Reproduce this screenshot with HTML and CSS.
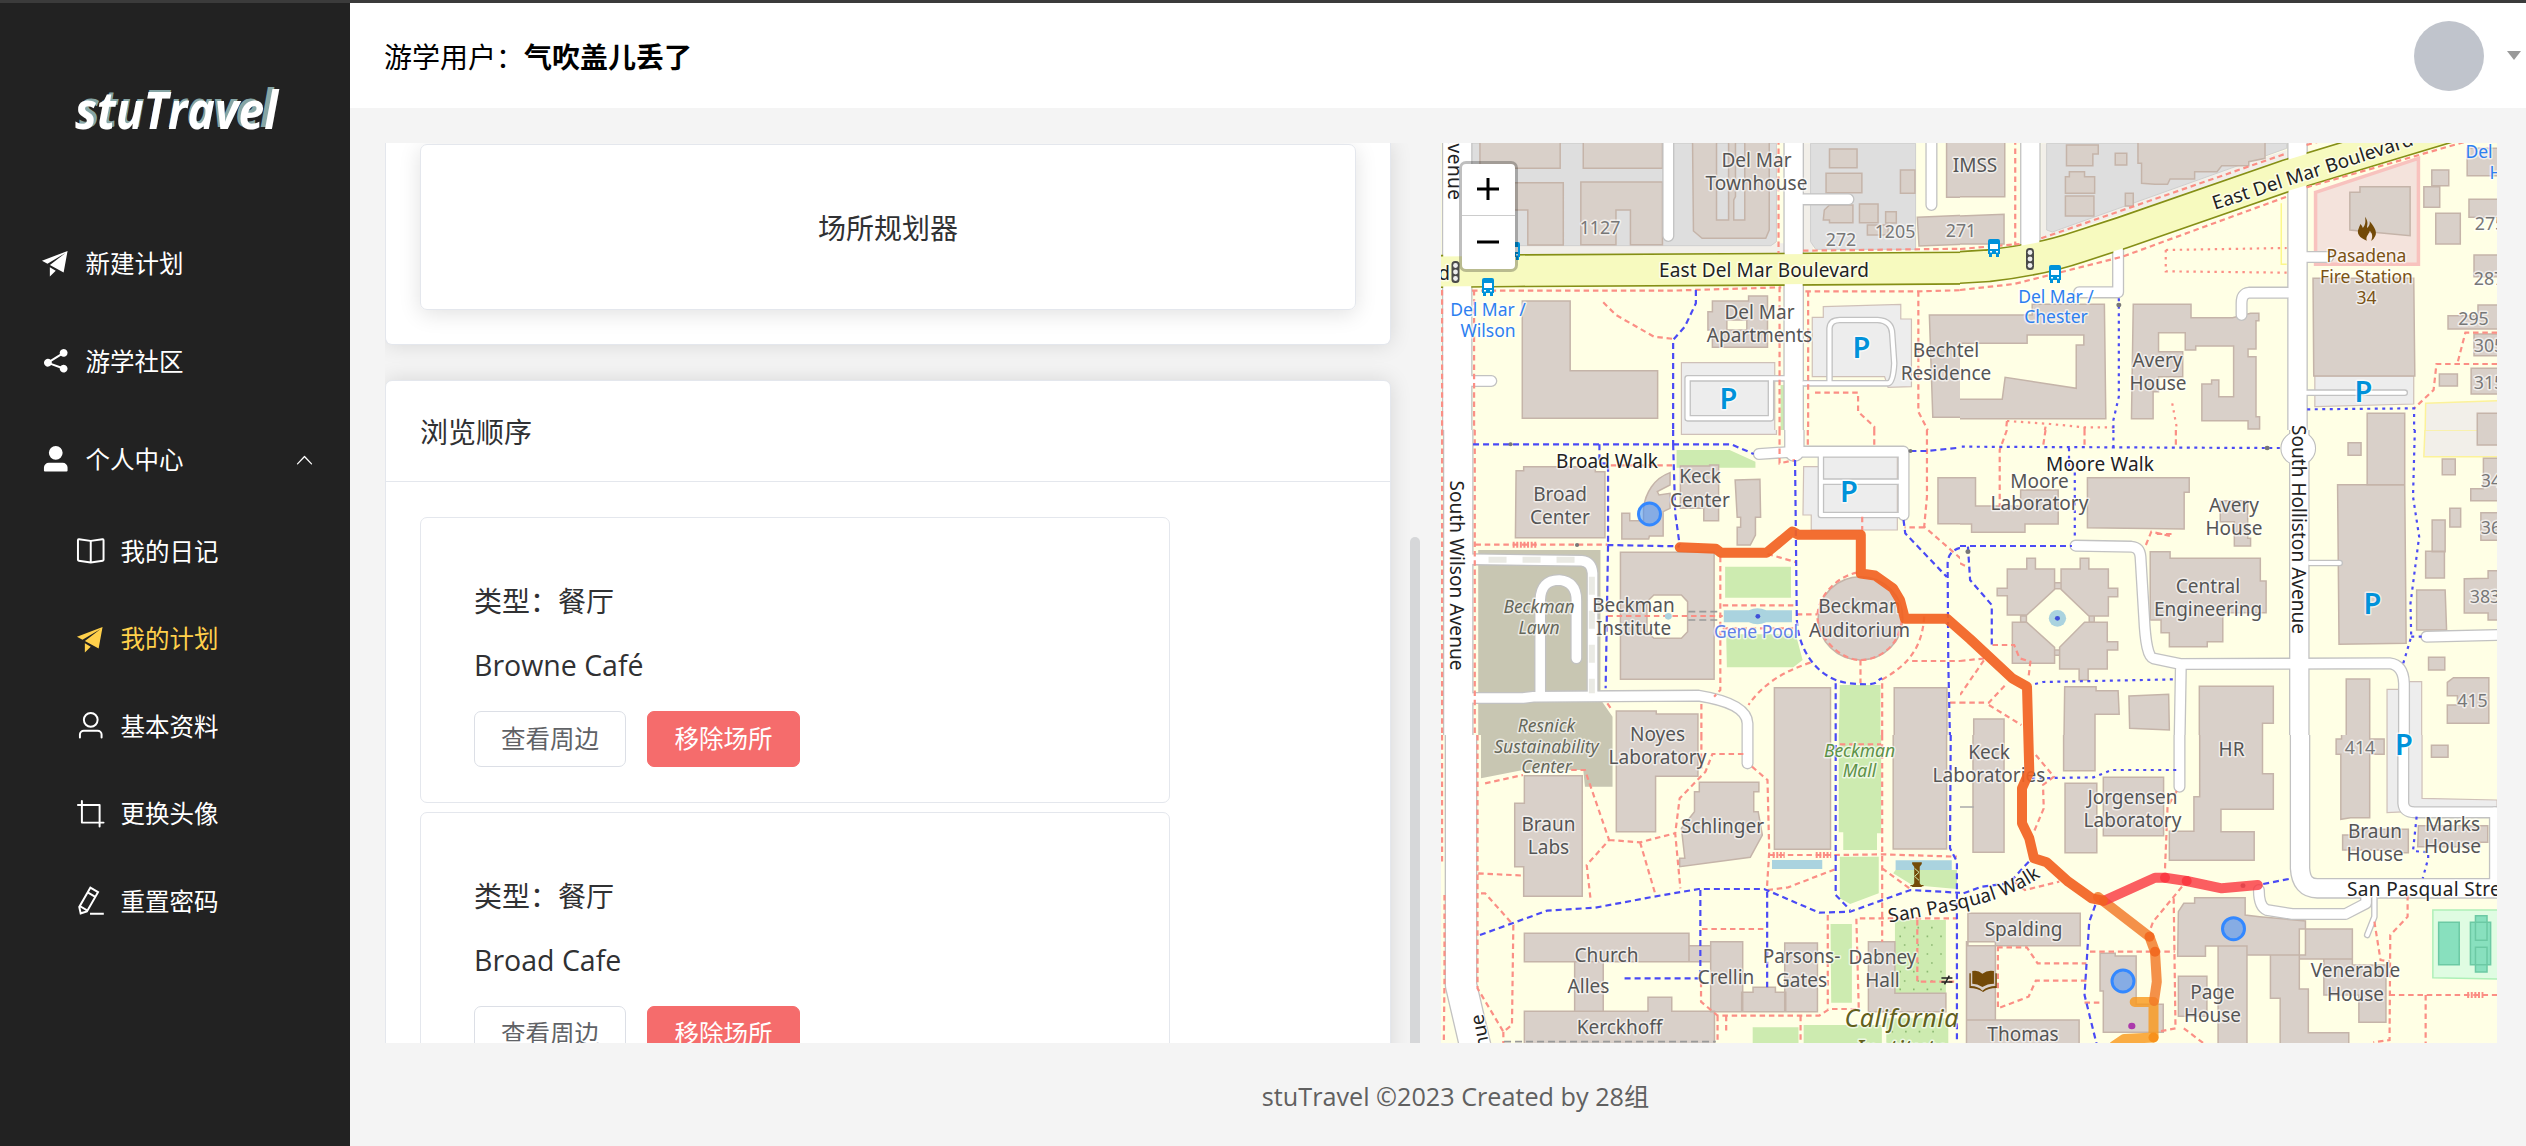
FILE: index.html
```html
<!DOCTYPE html>
<html lang="zh-CN">
<head>
<meta charset="utf-8">
<title>stuTravel</title>
<link rel="stylesheet" href="styles.css">
</head>
<body>
<div class="app">
  <aside class="sidebar">
    <svg class="logo" width="350" height="120" viewBox="0 0 350 120">
      <text class="logo-shadow" x="79" y="83" textLength="194" lengthAdjust="spacingAndGlyphs">stuTravel</text>
      <text class="logo-text" x="75" y="85" textLength="203" lengthAdjust="spacingAndGlyphs">stuTravel</text>
    </svg>
    <nav class="menu">
      <a class="item"><svg class="icon" viewBox="0 0 1024 1024"><path d="m64 448 832-320-128 704-446.08-243.328L832 192 242.816 545.472 64 448zm256 512V657.024L512 768 320 960z"/></svg>新建计划</a>
      <a class="item"><svg class="icon" viewBox="0 0 1024 1024"><path d="m679.872 348.8-301.76 188.608a127.808 127.808 0 0 1 5.12 52.16l279.936 104.96a128 128 0 1 1-22.464 59.904l-279.872-104.96a128 128 0 1 1-16.64-166.272l301.696-188.608a128 128 0 1 1 33.92 54.272z"/></svg>游学社区</a>
      <a class="item"><svg class="icon" viewBox="0 0 1024 1024"><path d="M288 320a224 224 0 1 0 448 0 224 224 0 1 0-448 0zm544 608H160a32 32 0 0 1-32-32v-96a160 160 0 0 1 160-160h448a160 160 0 0 1 160 160v96a32 32 0 0 1-32 32z"/></svg>个人中心<svg class="arrow" viewBox="0 0 1024 1024"><path d="m488.832 344.32-339.84 356.672a32 32 0 0 0 0 44.16l.384.384a29.44 29.44 0 0 0 42.688 0l320-335.872 319.872 335.872a29.44 29.44 0 0 0 42.688 0l.384-.384a32 32 0 0 0 0-44.16L535.168 344.32a32 32 0 0 0-46.336 0z"/></svg></a>
      <a class="item sub"><svg class="icon" viewBox="0 0 1024 1024"><path d="m512 863.36 384-54.848v-638.72L525.568 222.72a96 96 0 0 1-27.136 0L128 169.792v638.72l384 54.848zM137.024 106.432l370.432 52.928a32 32 0 0 0 9.088 0l370.432-52.928A64 64 0 0 1 960 169.792v638.72a64 64 0 0 1-54.976 63.36l-388.48 55.488a32 32 0 0 1-9.088 0l-388.48-55.488A64 64 0 0 1 64 808.512v-638.72a64 64 0 0 1 73.024-63.36z"/><path d="M480 192h64v704h-64z"/></svg>我的日记</a>
      <a class="item sub active"><svg class="icon" viewBox="0 0 1024 1024"><path d="m64 448 832-320-128 704-446.08-243.328L832 192 242.816 545.472 64 448zm256 512V657.024L512 768 320 960z"/></svg>我的计划</a>
      <a class="item sub"><svg class="icon" viewBox="0 0 1024 1024"><path d="M512 512a192 192 0 1 0 0-384 192 192 0 0 0 0 384zm0 64a256 256 0 1 1 0-512 256 256 0 0 1 0 512zm320 320v-96a96 96 0 0 0-96-96H288a96 96 0 0 0-96 96v96a32 32 0 1 1-64 0v-96a160 160 0 0 1 160-160h448a160 160 0 0 1 160 160v96a32 32 0 1 1-64 0z"/></svg>基本资料</a>
      <a class="item sub"><svg class="icon" viewBox="0 0 1024 1024"><path d="M256 768h672a32 32 0 1 1 0 64H224a32 32 0 0 1-32-32V96a32 32 0 0 1 64 0v672z"/><path d="M832 224v704a32 32 0 1 1-64 0V256H96a32 32 0 0 1 0-64h704a32 32 0 0 1 32 32z"/></svg>更换头像</a>
      <a class="item sub"><svg class="icon" viewBox="0 0 1024 1024"><path d="m199.04 672.64 193.984 112 224-387.968-193.92-112-224 388.032zm-23.872 60.16 32.896 148.288 144.896-45.696L175.168 732.8zM455.04 229.248l193.92 112 56.704-98.112-193.984-112-56.64 98.112zM104.32 708.8l384-665.024 304.768 175.936L409.152 884.8h.064l-248.448 78.336L104.32 708.8zm384 254.272v-64h448v64h-448z"/></svg>重置密码</a>
    </nav>
  </aside>
  <div class="main">
    <header class="header">
      <div>游学用户：<strong>气吹盖儿丢了</strong></div>
      <div class="user"><span class="avatar"></span><span class="caret"></span></div>
    </header>
    <main class="content">
      <div class="panel">
        <section class="card card-top"><div class="planner">场所规划器</div></section>
        <section class="card">
          <h2 class="card-header">浏览顺序</h2>
          <div class="card-body">
            <article class="place">
              <p>类型：餐厅</p><p class="place-name">Browne Café</p>
              <div class="actions"><button class="btn">查看周边</button><button class="btn danger">移除场所</button></div>
            </article>
            <article class="place">
              <p>类型：餐厅</p><p class="place-name">Broad Cafe</p>
              <div class="actions"><button class="btn">查看周边</button><button class="btn danger">移除场所</button></div>
            </article>
          </div>
        </section>
        <span class="thumb"></span>
      </div>
      <div class="map">
<svg class="map-canvas" width="1056" height="900" viewBox="1441 143 1056 900">
<defs>
  <g id="bus"><path d="M-6-7q0-2 2-2h8q2 0 2 2V6h-12zM-5 5h3v4h-3zM2 5h3v4h-3z" fill="#0092da"/><path d="M-4-4h8v5h-8z" fill="#fff"/><path d="M-4 3h2v1.500h-2zM2 3h2v1.500h-2z" fill="#fff"/></g>
  <g id="signal"><rect x="-4" y="-11" width="8" height="22" rx="3.500" fill="#4a4a4a"/><circle cy="-6.500" r="2.400" fill="#eee"/><circle r="2.400" fill="#eee"/><circle cy="6.500" r="2.400" fill="#eee"/></g>
</defs>

<!-- north west -->
<svg x="1430" y="130" width="540" height="310" viewBox="0 0 1568 930" preserveAspectRatio="none">
  <defs><g id="roads-nw"><path class="w28" d="M79 -20V950"/><path class="w19" d="M1056 -20V950"/><path class="w10" d="M692 -20V318M1456 -20V225M1085 208H1215M120 753H178"/><path class="w4" d="M748 745H1030M748 745V865H990V745M1160 760V595Q1162 570 1190 570H1300Q1340 572 1342 610L1348 700Q1345 758 1330 760H1085"/></g>
  <path id="blvd-nw" class="w30" d="M-20 425L250 422L1000 418L1600 414"/></defs>
  <rect class="land" width="1568" height="930"/>
  <path class="beige" d="M120 340H1028V375H120zM1083 40h30v330h-30z"/>
  <path class="grey" d="M120 40H1006V335L990 347H120zM1105 40H1410V358H1120L1105 335z"/>
  <path class="parking" d="M730 698h271v215H730zM1142 530L1367 523V567H1398V770L1330 772L1320 740H1110V562H1142z"/>
  <path class="grass" d="M1018 765h12v165h-12z"/>
  <path class="building" d="M145 0h233v115H145zM445 0h230v115H445zM245 158h142v187H284V240H245zM438 156h237v188H582V240H540V344H438zM762 0H985V300L975 325H790L765 303zM832 0V270H867V0zM887 0V200L882 210V270H914V0zM1160 57h80v56h-80zM1150 130h104v58h-104zM1366 120h42v70h-42zM1247 222h54v56h-54zM1323 245h31v34h-31zM1145 240L1160 225H1228V278H1160V270H1142zM1270 285h60v30h-60zM1500 0h68v202h-68zM1415 262L1568 255V342L1420 348zM820 513H925V498H980V652H820V600H807V545H820zM862 570V600H920V570zM268 513H407V722H661V865H268zM1450 555H1568V862H1460z"/>
  <use href="#roads-nw" class="casing"/><use href="#blvd-nw" class="casing2"/><use href="#roads-nw" class="street"/><use href="#blvd-nw" class="street2"/>
  <path class="foot" d="M122 482H700L1020 472M128 480V930M1012 0V370M1015 470V930M1083 362L1568 356M1090 484H1418L1568 480M1098 484V930M1418 484V845L1445 900V930M503 517L540 555L650 620L710 627M1118 788H1243V845L1290 890V930M35 480V930"/>
  <path class="cycle" d="M772 480V520L740 590L706 630V930"/>
</svg>

<!-- south-west block, middle row -->
<svg x="1430" y="430" width="540" height="310" viewBox="0 0 1568 930" preserveAspectRatio="none">
  <defs><g id="roads-w"><path class="w28" d="M82 -20V950"/><path class="w19" d="M1058 -20V65"/><path class="w10" d="M955 72L1058 65H1375V255M125 388L440 392Q470 395 472 430V790M320 790V510Q322 450 375 450Q425 455 425 510V685M125 804H270L300 800L780 797Q920 820 922 880V950"/><path class="w4" d="M1135 70V255H1370M1135 155H1360"/></g></defs>
  <rect class="land" width="1568" height="930"/>
  <path class="olive" d="M140 360H495V790H140zM140 815H500L530 860V930H140z"/>
  <path class="grass" d="M716 60H870L945 95V113H716zM857 410H1048V503H857zM860 613H1062L1082 690L1055 712H862zM1190 765H1308V930H1187z"/>
  <path class="water" d="M853 541h73q25-12 50 0h75v36h-75q-25 12-50 0h-73z"/>
  <path class="parking" d="M730 -5h276v18H730zM1085 110H1135V80H1357V300H1107V255H1083z"/>
  <path class="building" d="M250 122H272V110H480V125H508V323H248zM727 108H812V105H838V272H795V235H727zM886 150L958 148L960 262H945V315L930 345H892V292H902V262H892zM620 235C625 190 650 145 697 128V165L660 185L665 195L697 190V235L677 245V318H637L635 327H557V250H580V272H620zM553 367H825V748H553zM650 495L630 515V605L650 625H730L748 605V515L730 495zM1127 565a123 125 0 1 0 246 0a123 125 0 1 0 -246 0zM1475 143h93v138h-93zM1000 773h163v160h-163zM1348 773h153v160h-153zM541 843H657V852H778V935H541z"/>
  <use href="#roads-w" class="casing"/><use href="#roads-w" class="street"/>
  <path d="M170 389H430M470 440V790" fill="none" stroke="#eaeae4" stroke-width="6" stroke-dasharray="18 16"/>
  <path class="foot" d="M35 0V930M130 0V930M132 344H515M515 558H850M843 380V780L825 800M850 526H1065M850 595H1065M980 372L1065 397M1065 553H1125M1240 428C1180 440 1125 500 1125 560S1190 690 1250 690S1370 640 1370 560M1435 560C1430 640 1400 700 1310 750M1250 690V760M1400 693H1568M1105 698C1020 725 960 770 925 825M1313 760V930M1290 0V45M1443 0V200L1435 290L1568 410M1435 292H1378M1255 260V300M1015 0V100L1060 90M1097 0V45M525 106H710M515 820L525 835M788 822V930M1510 818H1568"/>
  <path class="steps" d="M240 344H312"/>
  <path class="cycle" d="M125 43H875L940 72M706 0V45M492 43V100H517V345L510 775M706 43L712 250L725 345M515 345L725 349M1060 90L1065 560C1065 650 1120 750 1220 760S1290 750 1313 745M1178 760V930M1375 270L1380 310L1500 440M1568 350Q1505 350 1503 400L1505 700L1510 930M1395 63H1440L1568 50"/>
  <path class="tunnel" d="M750 545H840M750 570H840"/>
  <circle cx="234" cy="43" r="6" fill="#777"/><circle cx="427" cy="345" r="6" fill="#777"/><circle cx="1395" cy="63" r="6" fill="#777"/>
  <circle cx="692" cy="559" r="10" fill="#aad3df"/><circle cx="952" cy="559" r="7" fill="#4050d8"/>
</svg>

<!-- south west -->
<svg x="1430" y="735" width="540" height="320" viewBox="0 0 1568 960" preserveAspectRatio="none">
  <defs><g id="roads-sw"><path class="w30" d="M90 -20V750L142 980"/><path class="w10" d="M922 -20V85"/></g></defs>
  <rect class="land" width="1568" height="960"/>
  <path class="olive" d="M148 0H530V155H450L445 105H270L148 130z"/>
  <path class="grass" d="M1187 0H1310V295H1298V345H1200V292H1187zM1190 365H1303V475L1220 507L1190 490zM1352 405H1530V462L1400 450L1345 415zM1163 567H1225V803H1165zM1350 555H1498V775H1350zM937 877H1070V930H937zM1085 870H1312V930H1085zM1325 850h180v80h-180z"/>
  <path class="orchard" d="M1376 578H1490M1363 604H1490M1376 630H1490M1363 657H1490M1376 684H1490M1363 710H1490M1376 738H1490M1363 763H1490M1340 890H1490"/>
  <path class="water" d="M993 375h146v27H993zM1352 376h163v29h-163z"/>
  <path class="building" d="M274 122H442V484H272V395H246V205H274zM541 -5H778V124H655V290H541zM782 142H955V170H940V230H953L965 300L930 367L725 395V370H740L730 280L768 230V170H782zM1000 -5h163v348h-163zM1345 -5h155v347h-155zM274 595H752V680H274zM752 632H815V680H752zM815 620H908V830H815zM905 772H938V757H1003V772H1033V830H905zM1030 624H1125V830H1030zM420 680H503V829H420zM274 829H633V787H702V829H826V965H274zM1273 620H1350V775H1498V830H1273zM1558 600H1600V715H1558zM1558 760H1600V960H1558z"/>
  <use href="#roads-sw" class="casing"/><use href="#roads-sw" class="street"/>
  <path class="foot" d="M138 0V760L213 890L238 870L242 570L160 475H138M213 890V930M140 415L275 422M160 145L270 120M410 105H450L520 315L455 390L467 500M520 315L610 322L710 295M610 322L655 480M788 0V110M910 57H820L800 110L725 190L712 295L727 460M935 95L980 135L985 350L978 465M985 360H1178L1315 358L1530 365M980 465L1040 457L1178 402M1313 0V620M1313 400L1395 462M790 582H978M787 740V800L835 842H1130L1160 822H1245L1238 550H1530M1155 540V820M860 842V890M1076 842V930M835 842V930M1415 555V740H1525M35 0V390M42 480V735L40 930M1190 28H1310"/>
  <path class="steps" d="M995 360H1030M1120 360H1165"/>
  <path class="cycle" d="M145 600L340 527L480 518L650 485L780 462H970L1130 533L1220 530L1395 465L1568 475M1178 0V480L1220 525M785 465V740M565 730H785M979 470V757M1512 0L1510 340L1530 380V930"/>
  <path class="tunnel" d="M215 920H830"/>
  <path d="M1400 382h28v5l-6 8v50l6 8v3h-28v-3l6-8v-50l-6-8zM1395 450h38v4h-38z" fill="#734a08"/><path d="M1407 400l13 12-13 12 13 12" fill="none" stroke="#cdebb0" stroke-width="1"/>
  <path d="M1485 729H1517M1485 741H1517M1508 722L1494 748" stroke="#222" stroke-width="1.500"/>
</svg>

<!-- north east -->
<svg x="1960" y="130" width="566" height="310" viewBox="0 0 1568 930" preserveAspectRatio="none">
  <defs><g id="roads-ne"><path class="w19" d="M195 -20V360M935 -20V950"/><path class="w10" d="M438 350V487H330M960 381H1020M908 488H800Q780 490 780 520V555"/><path class="w4" d="M960 788H1232"/></g>
  <path id="blvd-ne" class="w30" d="M-40 415L80 407Q220 390 330 350L450 308L905 137L1200 40L1400 -25"/></defs>
  <rect class="land" width="1568" height="930"/>
  <path class="beige" d="M225 40H250V320L225 330zM240 300L905 60V95L240 325z"/>
  <path class="grey" d="M240 40H905V55L256 306L240 300z"/>
  <path class="beige" d="M1290 820L1500 812V940H1288z" stroke="#fcf29a" stroke-width="1.500"/>
  <path d="M890 220V403H905" fill="none" stroke="#fcf88a" stroke-width="1.500"/>
  <path d="M985 187L1270 85V403H985z" fill="#f4e3dc" stroke="#f8c2be" stroke-width="3.500"/>
  <path class="parking" d="M983 738H1257V822L983 830z"/>
  <path class="building" d="M-5 0H124V200H-5zM-5 258L122 253V342H-5zM295 45H383V72H368V107H295zM430 70h32v35h-32zM292 140H303V125H345V140H373V190H292zM292 198h79v60h-79zM458 190h22v38h-22zM493 0H845V85L800 95V107H725L712 125H650V147H582L575 163H540L503 160V100H493zM1080 187H1108V170H1247V317L1080 300zM1405 55h90v82h-90zM1307 120h47v47h-47zM1285 170h44v62h-44zM1318 250h68v92h-68zM1410 208h90v54h-90zM1424 375h70v65h-70zM1352 557H1435V525H1500V597H1352zM1424 612h70v65h-70zM1416 715h80v77h-80zM1328 732h50v36h-50zM978 445H1257L1260 738H980zM1128 850h104v90h-104zM1433 850h70v90h-70zM-5 555H200V523H400L404 866H-5V808H117L125 742L322 775V645H343V615H186V640H-5zM480 523H640V563H755L805 550H828V572H820V657H798V680H820V860H830V897H798V872H670V762H697V750H717V800H758V648H653V660H624V608H550V665H617V740H550V785H535V866H475z"/>
  <use href="#roads-ne" class="casing"/><use href="#blvd-ne" class="casing2"/><use href="#roads-ne" class="street"/><use href="#blvd-ne" class="street2"/>
  <path class="foot" d="M153 0V345M0 357L165 342M225 325L905 70M960 45L1010 30M0 480L150 462L450 380L905 200M960 172L1400 35M130 873L130 875M130 873L125 930M237 890L230 930M345 892V930M1488 608H1400L1378 700M1488 702H1320L1312 780L1258 835"/>
  <path class="foot dotted" d="M570 360L905 354M570 360V424L905 428M130 873L250 882L345 892H425M588 820L600 890V930"/>
  <path class="cycle dotted" d="M440 505V800L425 870V930M962 838L1258 835V930"/>
  <circle cx="440" cy="525" r="7" fill="#777"/>
  <path d="M1122 260c12 18 4 26 6 34c6-5 8-12 7-20c14 18 24 36 12 50c-2 4-4 6-8 8c6-14 2-24-4-30c-2 12-12 16-8 30c-20-8-30-22-22-38c2-6 4-10 4-12c4 4 6 8 7 12c8-10 8-22 6-34z" fill="#734a08"/>
</svg>

<!-- middle east -->
<svg x="1960" y="430" width="566" height="310" viewBox="0 0 1568 930" preserveAspectRatio="none">
  <defs><g id="roads-e"><path class="w19" d="M940 -20V950"/><path class="w10" d="M320 347L475 350Q498 352 500 380L510 560Q515 680 535 685L610 702L1190 700Q1228 705 1230 760V950M612 702L608 950M1292 620L1520 614"/><path class="w4" d="M968 399H1052"/></g></defs>
  <rect class="land" width="1568" height="930"/>
  <path class="beige" d="M1288 0H1500V80H1285z" stroke="#fcf29a" stroke-width="1.500"/>
  <path class="parking" d="M1183 778h34v160h-34zM1245 755h34v185h-34z"/>
  <path class="building" d="M-5 143H43V228H168V180H272V282H180V307H32V282H-5zM353 143H635V187H621V297L353 293zM527 365H582V385H832V453H848V548H728V635H685V650H580V608H557V570H527zM721 212H797V325H805V348H760V275H721zM1128 -5H1232V165H1128zM1046 164H1232L1236 640L1050 643zM1075 38h36v38h-36zM1433 -5h60v50h-60zM1336 87h36v47h-36zM1450 85H1500V212H1415V176H1450zM1357 235h30v56h-30zM1308 270h36v95h-36zM1443 248h60v83h-60zM1290 364h52v80h-52zM1397 446L1463 445V422H1500V570H1463V549H1397zM1265 480h79l4 120h-83zM1298 682h45v38h-45zM1350 757L1367 743H1465V880H1350V825H1378V797H1350zM1070 747h65v190h-65zM663 769H868V880H838V935H663zM468 798L578 793L580 900L470 895zM290 770H377V782H438L441 853H374V935H288zM38 867h84v70h-84zM131 417H185V385H209V417H262V478L185 555H131V497H103V475H131zM280 417H333V385H357V417H411V475H437V500H411V558H357L280 478zM145 577H185L262 652V700H145zM276 652L345 577H408V635H437V660H408V717H355V750H330V717H276zM262 458h18v18h-18zM168 558h16v18h-16zM358 558h14v18h-14zM262 660h14v16h-14z"/>
  <ellipse cx="270" cy="565" rx="24" ry="25" fill="#aad3df"/><circle cx="270" cy="565" r="7" fill="#4050d8"/>
  <use href="#roads-e" class="casing"/><ellipse cx="937" cy="55" rx="48" ry="51" fill="#fff" stroke="#bdbdbd" stroke-width="3"/><use href="#roads-e" class="street"/>
  <path class="foot" d="M130 0L110 60V230M237 0L230 50M345 0V50M598 0V55M515 345L530 305L590 320M545 312H590M90 645H150L165 685L195 695L190 740M0 693L70 685L0 795M0 818H80L130 760M80 825L170 885M0 400L20 410"/>
  <path class="cycle dotted" d="M5 50L850 54L890 54M425 0V50M302 55V120H318V330M1260 0L1255 200L1272 320L1248 520L1250 620L1228 700M208 762L230 756L600 748M1250 620H1285"/>
  <path class="cycle" d="M0 348H310M22 350L28 450L88 525V655"/>
  <circle cx="851" cy="54" r="7" fill="#777"/><circle cx="22" cy="365" r="7" fill="#777"/>
</svg>

<!-- south east -->
<svg x="1960" y="735" width="566" height="320" viewBox="0 0 1568 960" preserveAspectRatio="none">
  <defs><g id="roads-se"><path class="w19" d="M942 -20V400Q945 460 990 460H1520"/><path class="w10" d="M608 -20V155M828 465Q828 515 850 525L920 537H1068L1125 505V490M1228 -20V205Q1230 232 1260 232H1510"/><path class="w4" d="M1148 490V545L1128 600"/><path class="w10" d="M1482 232V450"/></g></defs>
  <rect class="land" width="1568" height="960"/>
  <path class="parking" d="M1183 -5H1280V190L1488 195V230H1240L1183 233z"/>
  <path d="M1310 525H1500V732L1310 728z" fill="#dffce2" stroke="#aef0b8" stroke-width="1.500"/>
  <path d="M1326 562h57v127h-57zM1414 562h56v127h-56zM1428 542h32v74h-32zM1428 637h32v74h-32z" fill="#88e0be" stroke="#6cc9a4" stroke-width="1.500"/>
  <path class="building" d="M36 -5h86v357h-86zM287 -5h87v112h-87zM291 145h88v208h-88zM397 127h167v175h-167zM664 -5H838V116H868V223H723V290H815V376H580V289H648V185H664zM1042 12H1057V-5H1135V12H1175V58H1135V248H1082L1055 253V58H1042zM1306 31h46v36h-46zM1060 300H1090V283H1242V353H1218V345H1060zM1270 272H1462V322H1440V335H1268zM22 535H333V632H22zM18 620H98V855H18zM18 855H330V965H18zM388 655H430V663H488V808H563V892H397V768H388V682zM605 530L620 505H650V488H790V540L830 545L957 558V660H795V633H680V664H603zM940 582H1087V672H940zM1008 672H1087V690H1180V862H1105V780H1008zM860 660H940V762H965V893H1077V965H887V790H860zM715 633H795V965H715zM605 724h79v120h-79z"/>
  <use href="#roads-se" class="casing"/><use href="#roads-se" class="street"/>
  <path class="foot" d="M210 60L260 125L230 150L232 220L205 290M568 400L575 215L605 160M615 455L535 560L525 590M592 490L597 880M360 650H595M345 803H390M103 637H185L215 685H350M350 737H210L190 785L105 820V637M620 880L675 925M597 880L550 890M1240 480V545L1192 600L1190 915L1145 922M1148 560L1165 675L1190 680M1190 780H1488M1290 780V930M150 440L180 465L275 440"/>
  <path class="steps" d="M1405 780H1450"/>
  <path class="cycle" d="M10 475L60 455L135 445L195 375M375 510L358 560L345 780L378 925M840 447L920 430"/>
  <path class="cycle dotted" d="M200 130L370 127L420 105H600M1265 245L1255 348L1297 352V370L1282 430"/>
  <path d="M0 216H38" stroke="#aaa" stroke-width="1.500"/>
  <path d="M34 708q16-4 28 8q14-12 32-8v38q-18 0-32 10q-14-10-28-10zM30 715v38q20 0 32 14q16-14 36-14v-38h4v44q-24 0-38 12q-16-12-38-12v-44z" fill="#734a08"/>
  <circle cx="476" cy="873" r="10" fill="#ac39ac"/><circle cx="784" cy="452" r="7" fill="#777"/>
</svg>

<use href="#bus" x="1488" y="287"/><use href="#bus" x="1514" y="251"/><use href="#bus" x="1994" y="248"/><use href="#bus" x="2055" y="274"/>
<use href="#signal" x="1455.500" y="272"/><use href="#signal" x="2030" y="259"/>

<g class="labels" transform="translate(0 6.500)">
  <g class="parking-sign"><text x="1861.500" y="351.500">P</text><text x="1728.500" y="402">P</text><text x="2363.500" y="395.500">P</text><text x="1849" y="495">P</text><text x="2372.500" y="607">P</text><text x="2404" y="748.500">P</text></g>
  <g class="road">
    <text x="1764" y="270" textLength="210">East Del Mar Boulevard</text>
    <text x="1444" y="273">d</text>
    <text x="1607" y="461" textLength="102">Broad Walk</text><text x="2100" y="464" textLength="108">Moore Walk</text>
    <text transform="translate(1450 569) rotate(90)" textLength="190">South Wilson Avenue</text>
    <text transform="translate(1448 159) rotate(90)" textLength="69">Avenue</text>
    <text transform="translate(2292 523) rotate(90)" textLength="209">South Holliston Avenue</text>
    <text transform="translate(2314 169) rotate(-18)" y="2" textLength="210">East Del Mar Boulevard</text>
    <path id="pasqual-walk" d="M1889 916Q1950 906 1985 896T2045 867" fill="none" stroke="none"/>
    <text style="text-anchor:start"><textPath href="#pasqual-walk" textLength="160">San Pasqual Walk</textPath></text>
    <text x="2347" y="889.500" style="text-anchor:start" textLength="172">San Pasqual Street</text>
    <text transform="translate(1483 1007) rotate(-101)" style="text-anchor:end">Avenue</text>
  </g>
  <g class="place-label">
    <text x="1756.500" y="160">Del Mar</text><text x="1756.500" y="183">Townhouse</text><text x="1975" y="165.500">IMSS</text>
    <text x="1759.500" y="312">Del Mar</text><text x="1759.500" y="335">Apartments</text><text x="1946" y="350.500">Bechtel</text><text x="1946" y="373.500">Residence</text>
    <text x="2157.500" y="360.500">Avery</text><text x="2158" y="383.500">House</text>
    <text x="1560" y="494.500">Broad</text><text x="1560" y="517.500">Center</text><text x="1700" y="476">Keck</text><text x="1700" y="500">Center</text>
    <text x="1633.500" y="605">Beckman</text><text x="1633.500" y="628">Institute</text><text x="1859.500" y="606.500">Beckman</text><text x="1859.500" y="630">Auditorium</text>
    <text x="1657.500" y="734.500">Noyes</text><text x="1657.500" y="757.500">Laboratory</text>
    <text x="2039.500" y="481">Moore</text><text x="2039.500" y="503.500">Laboratory</text><text x="2234" y="505.500">Avery</text><text x="2234" y="528.500">House</text>
    <text x="2208" y="586">Central</text><text x="2208" y="609">Engineering</text>
    <text x="1548.500" y="824.500">Braun</text><text x="1548.500" y="847.500">Labs</text><text x="1722.500" y="826">Schlinger</text>
    <text x="1989" y="752.500">Keck</text><text x="1989" y="775.500">Laboratories</text>
    <text x="1606.500" y="955">Church</text><text x="1588.500" y="986.500">Alles</text><text x="1726" y="977.500">Crellin</text>
    <text x="1801.500" y="956.500">Parsons-</text><text x="1801.500" y="980">Gates</text><text x="1882.500" y="957.500">Dabney</text><text x="1882.500" y="980">Hall</text><text x="1619.500" y="1027.500">Kerckhoff</text>
    <text x="2231.500" y="749">HR</text><text x="2132.500" y="797.500">Jorgensen</text><text x="2132.500" y="820.500">Laboratory</text>
    <text x="2375" y="831.500">Braun</text><text x="2375" y="854.500">House</text><text x="2452.500" y="824">Marks</text><text x="2452.500" y="846.500">House</text>
    <text x="2023.500" y="929.500">Spalding</text><text x="2023" y="1034">Thomas</text><text x="2212.500" y="992.500">Page</text><text x="2212.500" y="1015">House</text>
    <text x="2355.500" y="970.500">Venerable</text><text x="2355.500" y="994">House</text>
  </g>
  <g class="number">
    <text x="1600" y="227">1127</text><text x="1841" y="239.500">272</text><text x="1895" y="231.500">1205</text><text x="1961" y="230">271</text>
    <text x="2490" y="223">275</text><text x="2489" y="278.500">287</text><text x="2473.500" y="318.500">295</text><text x="2489" y="345.500">305</text><text x="2489" y="382">315</text>
    <text x="2496" y="480">342</text><text x="2496" y="527">365</text><text x="2485" y="596.500">383</text><text x="2472.500" y="700.500">415</text><text x="2360" y="747.500">414</text>
  </g>
  <g class="stop">
    <text x="1488" y="309">Del Mar /</text><text x="1488" y="330">Wilson</text><text x="2056" y="296">Del Mar /</text><text x="2056" y="316.500">Chester</text><text x="2479" y="151.500">Del</text><text x="2496" y="172.500">H</text>
    <text x="1756" y="631" class="pool">Gene Pool</text>
  </g>
  <g class="amenity"><text x="2366.500" y="255.500">Pasadena</text><text x="2366.500" y="276.500">Fire Station</text><text x="2366.500" y="297">34</text></g>
  <g class="park"><text x="1539" y="606.500">Beckman</text><text x="1539" y="627.500">Lawn</text><text x="1546.500" y="725">Resnick</text><text x="1546.500" y="746">Sustainability</text><text x="1546.500" y="766.500">Center</text>
    <text x="1859.500" y="750.500" class="mall">Beckman</text><text x="1859.500" y="770.500" class="mall">Mall</text></g>
  <g class="campus"><text x="1901.500" y="1020" textLength="114">California</text><text x="1901.500" y="1051">Institute</text></g>
</g>

<g class="place-dots"><circle cx="1649.500" cy="514" r="11"/><circle cx="2233.500" cy="928.700" r="11"/><circle cx="2123" cy="981" r="11"/></g>
<g class="routes">
  <path stroke="#f99a20" d="M2134.700 1002H2153.500V1037.500L2124.300 1039L2114 1046"/>
  <path stroke="#f27a28" d="M2098 897L2149.500 936.700L2155 951.700L2156.800 981.700L2154 1001"/>
  <path stroke="#fb3b43" d="M2104 900.700L2155 877.700H2165L2186.700 881L2221.700 888.300L2257.800 885"/>
  <path stroke="#f26222" style="opacity:.92" d="M1679.700 547.300L1715.800 548.700L1721 552.700H1766.800L1792.300 531.500L1798.500 534.700H1860.800V573.500L1875 575.500L1893 588.300L1900 600L1904.900 618.700H1947L1970 639L2012.300 678.300L2027 686.700L2029.300 771.700L2022 788.300V823.300L2029.300 838.300L2034 858.300L2046.600 862.300L2068.300 881.700L2091.800 898.300L2103 900.700"/>
</g>
<g><circle cx="2165" cy="877.700" r="5" fill="#fb3b43"/><circle cx="2186.700" cy="881" r="5" fill="#fb3b43"/><circle cx="2149.500" cy="936.700" r="5" fill="#f26b22"/><circle cx="2155" cy="951.700" r="5" fill="#f26b22"/><circle cx="2153.500" cy="1037.500" r="5" fill="#f7911c"/></g>
</svg>
        <div class="zoom">
          <button aria-label="+"><svg width="22" height="22" viewBox="0 0 22 22"><path d="M0 11H22M11 0V22"/></svg></button>
          <button aria-label="−"><svg width="22" height="22" viewBox="0 0 22 22"><path d="M0 11H22"/></svg></button>
        </div>
      </div>
    </main>
    <footer class="footer">stuTravel ©2023 Created by 28组</footer>
  </div>
</div>
</body>
</html>
```
FILE: styles.css
```css
* { box-sizing: border-box; }
body {
  margin: 0;
  font: 28px "Open Sans", "Noto Sans CJK SC", sans-serif;
  color: #303133;
}
.app { display: flex; height: 1146px; border-top: 3px solid #3b3b3b; overflow: hidden; }
p, h2 { margin: 0; font-weight: 400; }
button { font-family: inherit; }

.sidebar { width: 350px; flex: none; background: #222; color: #fff; }
.logo { display: block; margin-top: 41px; }
.logo text { font: italic 700 52px "Open Sans", sans-serif; }
.logo-shadow { fill: #86a5a5; }
.logo-text { fill: #fff; }
.menu { display: flex; flex-direction: column; margin-top: 50px; }
.item { display: flex; align-items: center; height: 98px; padding: 0 35px 0 40px; font: 400 24.5px/1 "Noto Sans CJK SC", sans-serif; }
.item.sub { height: 87.5px; padding: 0 35px 2px 75px; }
.item.active { color: #ffd04b; }
.icon { width: 31.5px; height: 31.5px; margin-right: 14px; fill: currentColor; }
.arrow { width: 21px; height: 21px; margin-left: auto; fill: currentColor; }

.main { flex: 1; min-width: 0; display: flex; flex-direction: column; background: #f4f4f4; }
.header { height: 105px; flex: none; display: flex; align-items: center; justify-content: space-between; padding: 0 0 0 34px; background: #fff; color: #000; }
.header > div:first-child { font-family: "Noto Sans CJK SC", sans-serif; line-height: 1; }
.user { display: flex; align-items: center; gap: 23px; padding-right: 5px; }
.avatar { width: 70px; height: 70px; border-radius: 50%; background: #c0c4cc; }
.caret { border: 7.5px solid transparent; border-top: 9px solid #999; border-bottom: 0; }

.content { flex: none; display: flex; gap: 21px; height: 900px; margin: 35px 29px 0 35px; }
.panel { position: relative; width: 1035px; flex: none; overflow: hidden; }
.card { width: 1006px; background: #fff; border: 1.75px solid #e4e7ed; border-radius: 7px; box-shadow: 0 0 21px rgba(0,0,0,.12); }
.card-top { height: 202px; margin-bottom: 35px; padding: 1px 34px 0; border-top: 0; border-radius: 0 0 7px 7px; }
.planner { height: 166px; border: 1.75px solid #e4e7ed; border-radius: 7px; display: flex; align-items: center; justify-content: center; box-shadow: 0 4px 22px rgba(0,0,0,.12); }
.card-header { height: 101px; display: flex; align-items: center; padding: 0 34px; font-size: 28px; border-bottom: 1.75px solid #e4e7ed; }
.card-body { padding: 35px 34px; }
.place { width: 750px; height: 286px; margin-bottom: 9px; padding: 51px 53px 0; border: 1.75px solid #e4e7ed; border-radius: 7px; }
.place p { height: 64px; line-height: 64px; }
.place .place-name { font-size: 28.5px; }
.actions { display: flex; gap: 21px; margin-top: 14px; }
.btn { width: 152px; height: 56px; padding: 0; font-size: 24.5px; line-height: 1; color: #606266; background: #fff; border: 1.75px solid #dcdfe6; border-radius: 7px; }
.btn.danger { width: 153px; color: #fff; background: #f56c6c; border-color: #f56c6c; }
.thumb { position: absolute; left: 1025px; top: 394px; width: 10px; height: 560px; border-radius: 5px; background: #d6d7d9; }
.footer { height: 105px; display: flex; align-items: center; justify-content: center; margin-left: 35px; font-size: 25.2px; color: #606060; }

/* map */
.map { position: relative; width: 1056px; height: 900px; overflow: hidden; }
.map-canvas { display: block; }
.map-canvas path, .map-canvas use { vector-effect: non-scaling-stroke; }
.land { fill: #ffffe5; }
.grey { fill: #dedede; stroke: #cfcfcf; stroke-width: 1px; }
.beige { fill: #f2efe9; }
.olive { fill: #c8c6b2; }
.grass { fill: #cdebb0; }
.water { fill: #aad3df; }
.parking { fill: #ededed; stroke: #cfc0b8; stroke-width: 1.2px; }
.building { fill: #d9d0c9; fill-rule: evenodd; stroke: #c5b4a9; stroke-width: 1.5px; }
.orchard { fill: none; stroke: #8cb872; stroke-width: 1.6px; stroke-dasharray: 1.6 12; }
.w4 { stroke-width: calc(4px + var(--edge, 0px)); }
.w10 { stroke-width: calc(9.5px + var(--edge, 0px)); }
.w19 { stroke-width: calc(18px + var(--edge, 0px)); }
.w28 { stroke-width: calc(28px + var(--edge, 0px)); }
.w30 { stroke-width: calc(30px + var(--edge, 0px)); }
.casing, .street, .casing2, .street2 { fill: none; stroke-linecap: round; stroke-linejoin: round; }
.casing { --edge: 2.6px; stroke: #c2c2c2; }
.street { stroke: #fff; }
.casing2 { --edge: 3.2px; stroke: #858f16; }
.street2 { stroke: #f7fabf; }
.foot { fill: none; stroke: #fb8f85; stroke-width: 2.2px; stroke-dasharray: 5.5 3.8; }
.foot.dotted { stroke-dasharray: 2.4 4.6; }
.cycle { fill: none; stroke: #4a4af5; stroke-width: 2.2px; stroke-dasharray: 6 4; }
.cycle.dotted { stroke-dasharray: 3 4.5; }
.steps { fill: none; stroke: #fb8c82; stroke-width: 6px; stroke-dasharray: 2 1.6; }
.tunnel { fill: none; stroke: #999; stroke-width: 1.6px; stroke-dasharray: 7 4; }
.labels text { font-family: "Noto Sans", sans-serif; font-size: 19px; text-anchor: middle; paint-order: stroke; stroke: rgba(255,255,255,.65); stroke-width: 3px; stroke-linejoin: round; }
.road { fill: #222; }
.place-label { fill: #555; }
.number { fill: #777; }
.labels .number text { font-size: 17.8px; }
.stop { fill: #2d7ff0; }
.stop .pool { fill: #6080e8; }
.labels .stop text, .labels .amenity text, .labels .park text { font-size: 17.5px; }
.amenity { fill: #7a5214; }
.park { fill: #65675a; font-style: italic; }
.park .mall { fill: #5c9148; }
.labels .campus text { font-size: 25px; }
.campus { fill: #62601c; font-style: italic; }
.labels .parking-sign text { fill: #0092da; font-size: 29px; font-weight: 600; }
.routes path { fill: none; stroke-width: 10px; stroke-linecap: round; stroke-linejoin: round; opacity: .82; }
.place-dots circle { fill: rgba(51,136,255,.5); stroke: #3388ff; stroke-width: 3px; }
.zoom { position: absolute; left: 17.5px; top: 17.5px; width: 59px; border: 3.5px solid rgba(0,0,0,.25); border-radius: 7px; background: #fff; background-clip: padding-box; }
.zoom button { display: flex; align-items: center; justify-content: center; width: 100%; height: 52.5px; padding: 0; border: 0; background: none; }
.zoom button:first-child { border-bottom: 1.75px solid #ccc; }
.zoom path { stroke: #000; stroke-width: 3; }
```
